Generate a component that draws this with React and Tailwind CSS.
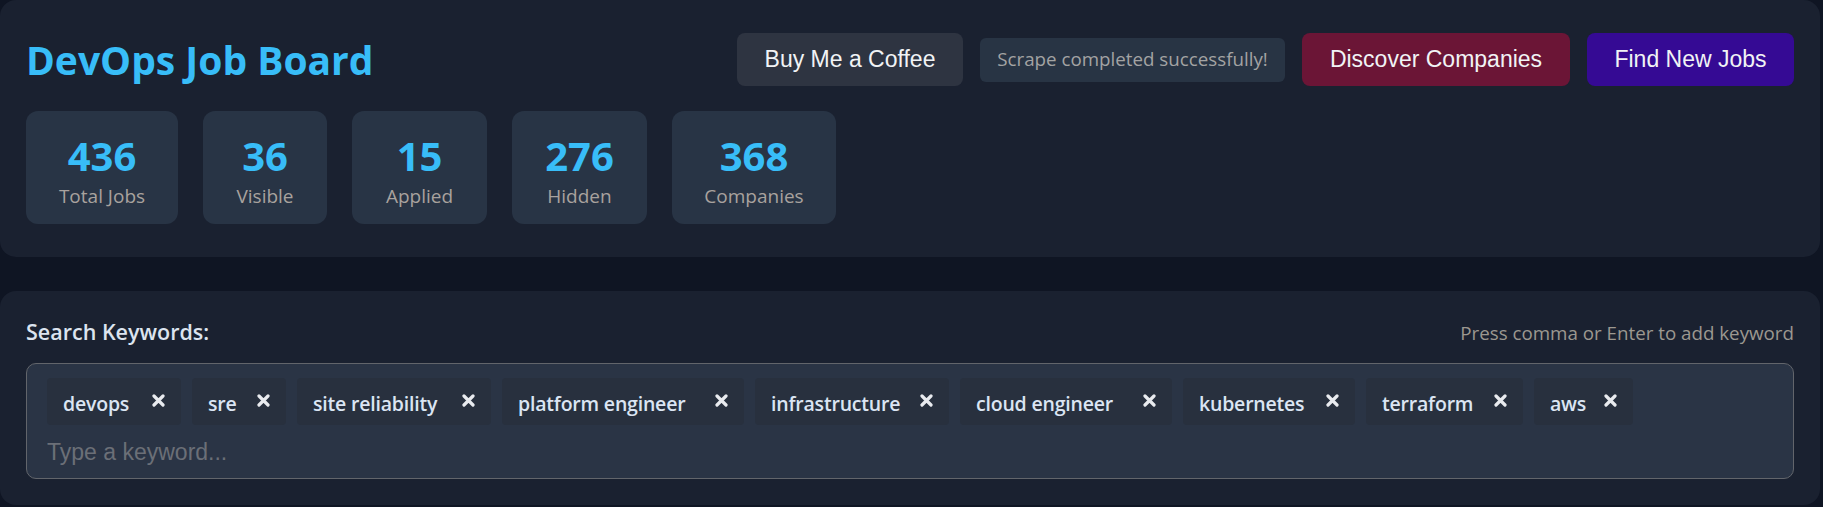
import React from "react";

const stats = [
  { value: "436", label: "Total Jobs", w: "w-[152px]" },
  { value: "36", label: "Visible", w: "w-[124px]" },
  { value: "15", label: "Applied", w: "w-[135px]" },
  { value: "276", label: "Hidden", w: "w-[135px]" },
  { value: "368", label: "Companies", w: "w-[164px]" },
];

const keywords = [
  { k: "devops", w: "w-[134px]" },
  { k: "sre", w: "w-[94px]" },
  { k: "site reliability", w: "w-[194px]" },
  { k: "platform engineer", w: "w-[242px]" },
  { k: "infrastructure", w: "w-[194px]" },
  { k: "cloud engineer", w: "w-[212px]" },
  { k: "kubernetes", w: "w-[172px]" },
  { k: "terraform", w: "w-[157px]" },
  { k: "aws", w: "w-[99px]" },
];

function XIcon() {
  return (
    <svg width="13" height="13" viewBox="0 0 13 13" className="mt-[5px] ml-[10px] shrink-0">
      <path d="M2 2 L11 11 M11 2 L2 11" stroke="#e9ebef" strokeWidth="3.2" strokeLinecap="round" />
    </svg>
  );
}

export default function App() {
  return (
    <div className="min-h-screen bg-[#0f1523] font-['Open_Sans',sans-serif]">
      <div className="w-[1820px]">
        <header className="bg-[#1a2130] rounded-[16px] pt-[33px] pb-[33px] pl-[26px] pr-[26px]">
          <div className="flex items-center justify-between h-[53px]">
            <h1 className="text-[39px] font-bold leading-none text-[#38bdf8]">DevOps Job Board</h1>
            <div className="flex items-center gap-[17px]">
              <button className="w-[226px] h-[53px] rounded-[8px] bg-[#2e3441] text-[#f1f3f5] text-[23px] font-['Liberation_Sans',Arial,sans-serif]">
                Buy Me a Coffee
              </button>
              <div className="w-[305px] h-[44px] flex items-center justify-center rounded-[6px] bg-[#283444] text-[#a3a3a3] text-[18.75px]">
                Scrape completed successfully!
              </div>
              <button className="w-[268px] h-[53px] rounded-[8px] bg-[#6b1536] text-[#f1f3f5] text-[23px] font-['Liberation_Sans',Arial,sans-serif]">
                Discover Companies
              </button>
              <button className="w-[207px] h-[53px] rounded-[8px] bg-[#350a94] text-[#f1f3f5] text-[23px] font-['Liberation_Sans',Arial,sans-serif]">
                Find New Jobs
              </button>
            </div>
          </div>
          <div className="flex gap-[25px] mt-[25px]">
            {stats.map((s) => (
              <div
                key={s.label}
                className={`${s.w} h-[113px] rounded-[12px] bg-[#283445] flex flex-col items-center pt-[25px]`}
              >
                <div className="text-[40px] font-bold leading-none text-[#38bdf8]">{s.value}</div>
                <div className="mt-[8px] text-[19px] leading-[24px] text-[#a8a29e]">{s.label}</div>
              </div>
            ))}
          </div>
        </header>

        <section className="mt-[34px] bg-[#1a2130] rounded-[16px] pt-[26px] pb-[26px] px-[26px]">
          <div className="flex items-baseline justify-between">
            <label className="text-[21.5px] font-semibold leading-[30px] text-[#dce4ef]">Search Keywords:</label>
            <span className="text-[18.75px] text-[#9c9890]">Press comma or Enter to add keyword</span>
          </div>
          <div className="mt-[16px] border border-[#62656b] rounded-[10px] bg-[#2a3445] pt-[14px] pb-[13px] pl-[20px] pr-[19px]">
            <div className="flex flex-wrap gap-[11px]">
              {keywords.map(({ k, w }) => (
                <div
                  key={k}
                  className={`${w} h-[47px] flex items-start justify-between pt-[11px] px-[16px] rounded-[4px] bg-[#28303e]`}
                >
                  <span className="text-[19.5px] tracking-[-0.2px] font-semibold leading-[30px] text-[#dbe5f3] whitespace-nowrap">{k}</span>
                  <XIcon />
                </div>
              ))}
            </div>
            <input
              className="mt-[14px] block w-full h-[26px] bg-transparent outline-none text-[23px] text-[#d0d4da] placeholder:text-[#6b6f77] font-['Liberation_Sans',Arial,sans-serif]"
              placeholder="Type a keyword..."
            />
          </div>
        </section>
      </div>
    </div>
  );
}
